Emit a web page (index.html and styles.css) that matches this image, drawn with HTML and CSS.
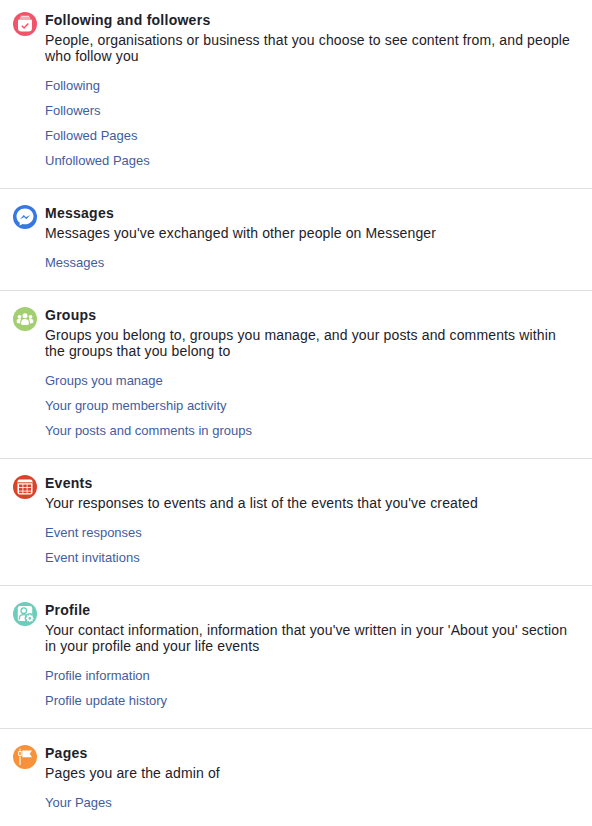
FILE: index.html
```html
<!DOCTYPE html>
<html lang="en">
<head>
<meta charset="utf-8">
<title>Your information</title>
<link rel="stylesheet" href="styles.css">
</head>
<body>
<section class="sec first">
  <svg class="ico" viewBox="0 0 24 24"><circle cx="12" cy="12" r="12" fill="#f35369"/><path d="M7.800 4.300h8.400M6.800 6h10.400" stroke="#fff" stroke-width="1" fill="none"/><path d="M6.300 7.500h11.400a1.300 1.300 0 0 1 1.300 1.300v7.200a3.500 3.500 0 0 1-3.500 3.500H8.500A3.500 3.500 0 0 1 5 16V8.800a1.300 1.300 0 0 1 1.300-1.300z" fill="#fff"/><path d="M8.800 13.700l2.300 2.300 4.200-4.400" stroke="#f35369" stroke-width="1.500" fill="none"/></svg>
  <div class="body">
    <h2>Following and followers</h2>
    <p>People, organisations or business that you choose to see content from, and people who follow you</p>
    <ul>
      <li><a href="#">Following</a></li>
      <li><a href="#">Followers</a></li>
      <li><a href="#">Followed Pages</a></li>
      <li><a href="#">Unfollowed Pages</a></li>
    </ul>
  </div>
</section>
<section class="sec">
  <svg class="ico" viewBox="0 0 24 24"><circle cx="12" cy="12" r="12" fill="#3578e5"/><path d="M12 3.500c-4.700 0-8.500 3.500-8.500 7.900 0 2.500 1.200 4.700 3.200 6.200v3l2.900-1.600c.8.200 1.600.3 2.400.3 4.700 0 8.500-3.500 8.500-7.900S16.700 3.500 12 3.500z" fill="#fff"/><path d="M6.800 14.400l4-4.300 2.100 2.100 4.300-2.300-4 4.300-2.100-2.200z" fill="#3578e5"/></svg>
  <div class="body">
    <h2>Messages</h2>
    <p>Messages you've exchanged with other people on Messenger</p>
    <ul>
      <li><a href="#">Messages</a></li>
    </ul>
  </div>
</section>
<section class="sec">
  <svg class="ico" viewBox="0 0 24 24"><circle cx="12" cy="12" r="12" fill="#a3ce71"/><g fill="#fff"><circle cx="12" cy="8.700" r="2.500"/><circle cx="6.500" cy="9.800" r="1.900"/><circle cx="17.500" cy="9.800" r="1.900"/><path d="M8.200 17.400v-2.300c0-2 1.600-3.100 3.800-3.100s3.800 1.100 3.800 3.100v2.300c-1 .4-2.400.7-3.800.7s-2.800-.3-3.800-.7z"/><path d="M7.200 16.600c-1.300-.1-2.600-.4-3.500-.9v-1.800c0-1.400 1.200-2.200 2.800-2.200.7 0 1.300.1 1.800.4-.7.600-1.100 1.500-1.100 2.700z"/><path d="M16.800 16.600c1.300-.1 2.600-.4 3.500-.9v-1.800c0-1.400-1.200-2.200-2.800-2.200-.7 0-1.300.1-1.800.4.7.6 1.100 1.500 1.100 2.700z"/></g></svg>
  <div class="body">
    <h2>Groups</h2>
    <p>Groups you belong to, groups you manage, and your posts and comments within the groups that you belong to</p>
    <ul>
      <li><a href="#">Groups you manage</a></li>
      <li><a href="#">Your group membership activity</a></li>
      <li><a href="#">Your posts and comments in groups</a></li>
    </ul>
  </div>
</section>
<section class="sec">
  <svg class="ico" viewBox="0 0 24 24"><circle cx="12" cy="12" r="12" fill="#d9432a"/><path d="M6.500 4.500h11a2 2 0 0 1 2 2V17a2.500 2.500 0 0 1-2.500 2.500H7A2.500 2.500 0 0 1 4.500 17V6.500a2 2 0 0 1 2-2z" fill="#fff"/><path d="M4.500 7.800h15" stroke="#d9432a" stroke-width="1"/><g fill="#d9432a"><rect x="6" y="9.500" width="3.500" height="2.700"/><rect x="10.300" y="9.500" width="3.400" height="2.700"/><rect x="14.500" y="9.500" width="3.500" height="2.700"/><rect x="6" y="13" width="3.500" height="2.700"/><rect x="10.300" y="13" width="3.400" height="2.700"/><rect x="14.500" y="13" width="3.500" height="2.700"/><rect x="6" y="16.500" width="3.500" height="1.700"/><rect x="10.300" y="16.500" width="3.400" height="1.700"/><rect x="14.500" y="16.500" width="3.500" height="1.700"/></g></svg>
  <div class="body">
    <h2>Events</h2>
    <p>Your responses to events and a list of the events that you've created</p>
    <ul>
      <li><a href="#">Event responses</a></li>
      <li><a href="#">Event invitations</a></li>
    </ul>
  </div>
</section>
<section class="sec">
  <svg class="ico" viewBox="0 0 24 24"><circle cx="12" cy="12" r="12" fill="#6bcebb"/><rect x="4.800" y="4" width="14.400" height="15" rx="2.200" fill="#fff"/><circle cx="10.800" cy="8.700" r="2.800" fill="none" stroke="#6bcebb" stroke-width="1.300"/><path d="M6.400 17.400v-1.500c0-2 2-3.300 4.400-3.300 1.100 0 2.100.3 2.900.7" fill="none" stroke="#6bcebb" stroke-width="1.300"/><circle cx="16.800" cy="16.300" r="5.200" fill="#6bcebb"/><circle cx="16.800" cy="16.300" r="2.200" fill="none" stroke="#fff" stroke-width="1.700"/><path d="M16.800 12.500v1.300M16.800 18.800v1.300M13 16.300h1.300M19.300 16.300h1.300M14.100 13.600l.9.900M18.600 18.100l.9.900M14.100 19l.9-.9M18.600 14.500l.9-.9" stroke="#fff" stroke-width="1.300"/></svg>
  <div class="body">
    <h2>Profile</h2>
    <p>Your contact information, information that you've written in your 'About you' section in your profile and your life events</p>
    <ul>
      <li><a href="#">Profile information</a></li>
      <li><a href="#">Profile update history</a></li>
    </ul>
  </div>
</section>
<section class="sec">
  <svg class="ico" viewBox="0 0 24 24"><circle cx="12" cy="12" r="12" fill="#f7923b"/><path d="M7 3.800v1.700M7 11.500v8.500" stroke="#fff" stroke-width="1.200" fill="none"/><path d="M5.700 6.500h2.600v4H5.700z" fill="none" stroke="#fff" stroke-width="1"/><path d="M9.300 5.500h9.700l-2.300 3.300 2.300 3.400H9.300z" fill="#fff"/></svg>
  <div class="body">
    <h2>Pages</h2>
    <p>Pages you are the admin of</p>
    <ul>
      <li><a href="#">Your Pages</a></li>
    </ul>
  </div>
</section>
</body>
</html>
```

FILE: styles.css
```css
html, body {
  margin: 0;
  padding: 0;
  background: #fff;
}
body {
  font-family: "Liberation Sans", Arial, sans-serif;
  font-size: 14px;
  color: #1d2129;
  overflow: hidden;
}
.sec {
  display: flex;
  align-items: flex-start;
  gap: 8px;
  padding: 16px 16px 15px 13px;
  border-bottom: 1px solid #dddfe2;
}
.sec.first {
  padding-top: 12px;
}
.sec:last-child {
  border-bottom: 0;
}
.ico {
  flex: none;
  width: 24px;
  height: 24px;
}
.body {
  flex: 1;
  min-width: 0;
}
h2 {
  margin: 0 0 4px;
  font-size: 14px;
  line-height: 16px;
  font-weight: 700;
  letter-spacing: 0.26px;
}
p {
  margin: 0;
  line-height: 16px;
  letter-spacing: 0.14px;
}
ul {
  list-style: none;
  margin: 9px 0 0;
  padding: 0;
}
li {
  font-size: 13px;
  line-height: 17px;
  padding: 4px 0;
}
a {
  color: #3f5d9e;
  text-decoration: none;
}
```
